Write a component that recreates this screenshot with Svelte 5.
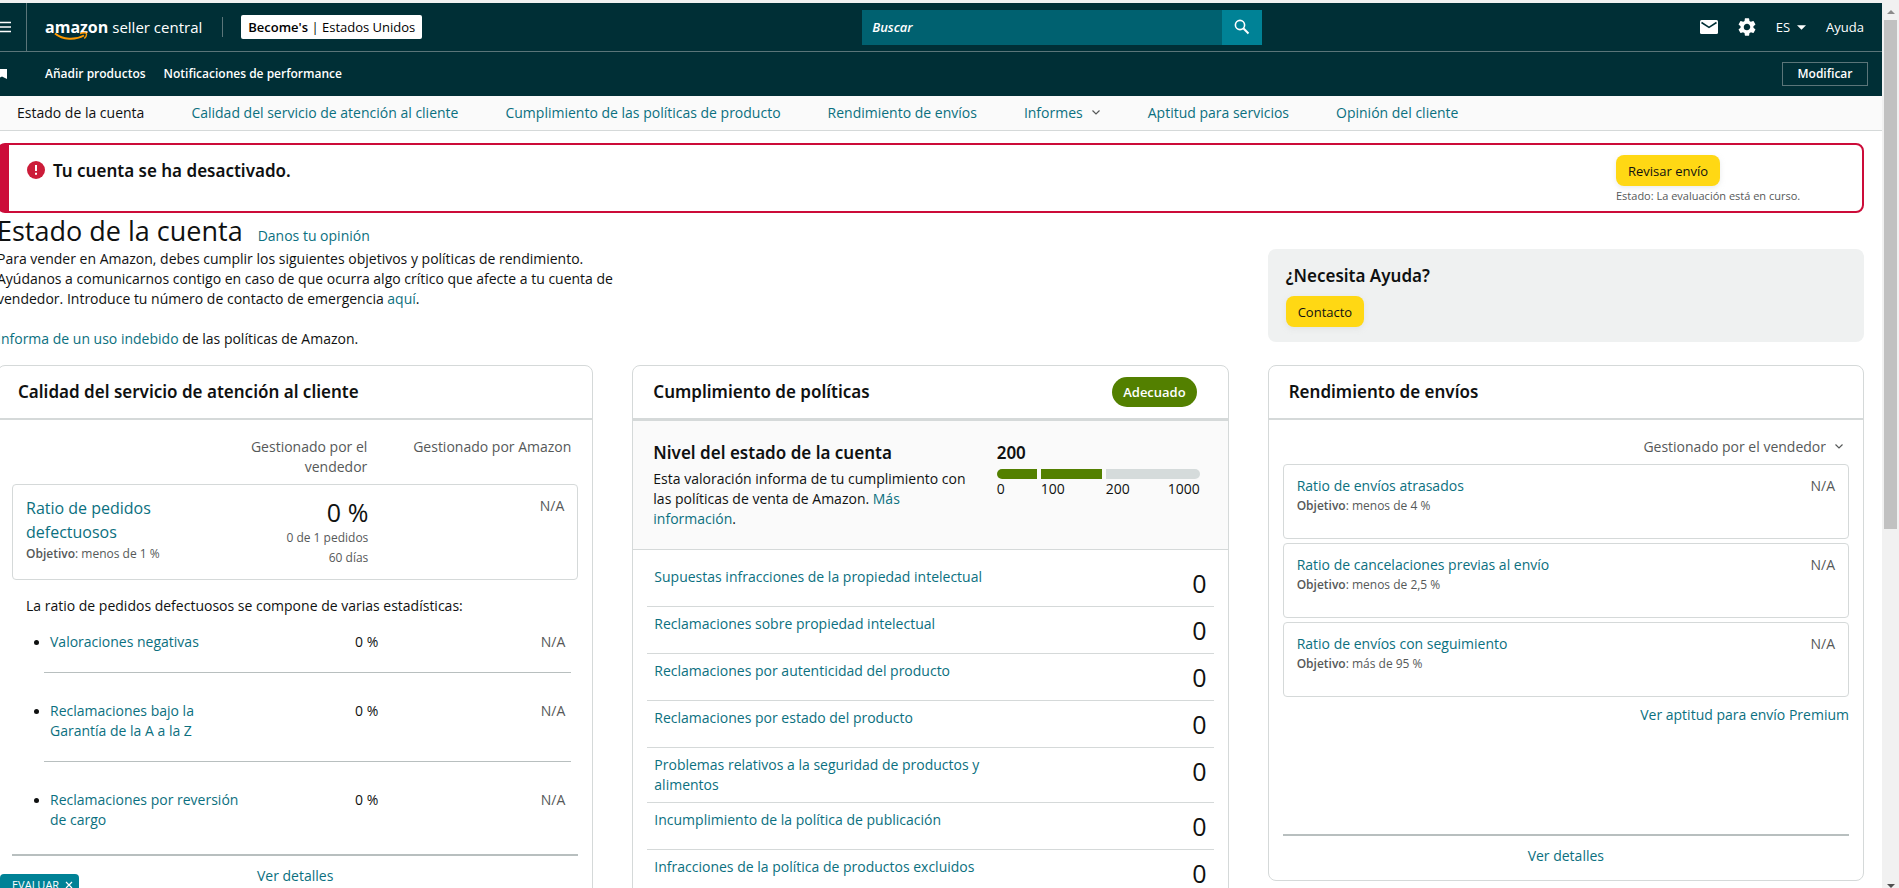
<script lang="ts">
    interface Tab {
        label: string;
        menu?: boolean;
    }

    interface Metric {
        name: string;
        target: string;
        value: string;
    }

    let query = $state('');
    let language = $state('ES');
    let channel = $state('seller');
    let activeTab = $state('Estado de la cuenta');
    let showFeedback = $state(true);

    const tabs: Tab[] = [
        { label: 'Estado de la cuenta' },
        { label: 'Calidad del servicio de atención al cliente' },
        { label: 'Cumplimiento de las políticas de producto' },
        { label: 'Rendimiento de envíos' },
        { label: 'Informes', menu: true },
        { label: 'Aptitud para servicios' },
        { label: 'Opinión del cliente' }
    ];

    const defects = [
        { name: 'Valoraciones negativas', seller: '0 %', amazon: 'N/A' },
        { name: 'Reclamaciones bajo la Garantía de la A a la Z', seller: '0 %', amazon: 'N/A' },
        { name: 'Reclamaciones por reversión de cargo', seller: '0 %', amazon: 'N/A' }
    ];

    const policies = [
        { name: 'Supuestas infracciones de la propiedad intelectual', count: 0 },
        { name: 'Reclamaciones sobre propiedad intelectual', count: 0 },
        { name: 'Reclamaciones por autenticidad del producto', count: 0 },
        { name: 'Reclamaciones por estado del producto', count: 0 },
        { name: 'Problemas relativos a la seguridad de productos y alimentos', count: 0 },
        { name: 'Incumplimiento de la política de publicación', count: 0 },
        { name: 'Infracciones de la política de productos excluidos', count: 0 }
    ];

    const shipping: Metric[] = [
        { name: 'Ratio de envíos atrasados', target: 'menos de 4 %', value: 'N/A' },
        { name: 'Ratio de cancelaciones previas al envío', target: 'menos de 2,5 %', value: 'N/A' },
        { name: 'Ratio de envíos con seguimiento', target: 'más de 95 %', value: 'N/A' }
    ];
</script>

{#snippet chevron()}
    <svg class="chevron" viewBox="0 0 10 10" aria-hidden="true">
        <path d="M1.5 2.500 5 6 8.500 2.500" fill="none" stroke="currentColor" stroke-width="1.2" />
    </svg>
{/snippet}

<div class="page">
    <header>
        <div class="topbar">
            <div class="brand">
                <button class="menu-btn" aria-label="Menú">
                    <svg viewBox="0 0 12 12" aria-hidden="true">
                        <path d="M0 1.500h11M0 6h11M0 10.500h11" stroke="#fff" stroke-width="1.500" />
                    </svg>
                </button>
                <a class="logo" href="#home">
                    <span class="logo-amazon">
                        amazon
                        <svg viewBox="0 0 34 9" aria-hidden="true">
                            <path d="M1 1.500C9 8 21 8.500 30 3.500" fill="none" stroke="#f90" stroke-width="2" />
                            <path d="M26 1.500C29 .6 31.500 .6 32.300 1.300 32.800 2.600 31.800 5 30.300 6.500" fill="none" stroke="#f90" stroke-width="1.400" />
                        </svg>
                    </span>
                    <span class="logo-central">seller central</span>
                </a>
                <button class="account"><b>Become's</b> | Estados Unidos</button>
            </div>

            <form class="search" onsubmit={(e) => e.preventDefault()}>
                <input type="text" placeholder="Buscar" aria-label="Buscar" bind:value={query} />
                <button aria-label="Iniciar búsqueda">
                    <svg viewBox="0 0 16 16" aria-hidden="true">
                        <circle cx="6" cy="6" r="4.600" fill="none" stroke="#fff" stroke-width="1.600" />
                        <path d="M9.300 9.300 14.500 14.500" stroke="#fff" stroke-width="2" />
                    </svg>
                </button>
            </form>

            <div class="tools">
                <a href="#messages" aria-label="Mensajes">
                    <svg class="mail" viewBox="0 0 18 14" aria-hidden="true">
                        <rect width="18" height="14" rx="1.500" fill="#fff" />
                        <path d="M1.500 2.500 9 7.300 16.500 2.500" fill="none" stroke="#002f36" stroke-width="1.600" />
                    </svg>
                </a>
                <a href="#settings" aria-label="Configuración">
                    <svg class="gear" viewBox="2 2 20 20" aria-hidden="true">
                        <path fill="#fff" d="M19.140 12.940c.04-.3.060-.61.060-.94 0-.32-.02-.64-.07-.94l2.030-1.580a.49.49 0 0 0 .12-.61l-1.920-3.320a.488.488 0 0 0-.59-.22l-2.390.96c-.5-.38-1.030-.7-1.620-.94l-.36-2.540a.484.484 0 0 0-.48-.41h-3.840c-.24 0-.43.17-.47.41l-.36 2.540c-.59.24-1.130.57-1.620.94l-2.390-.96c-.22-.08-.47 0-.59.22L2.740 8.870c-.12.210-.08.470.12.610l2.030 1.580c-.05.3-.09.630-.09.940s.02.640.07.940l-2.030 1.580a.49.49 0 0 0-.12.610l1.920 3.320c.12.220.370.290.590.220l2.390-.96c.5.380 1.030.7 1.620.940l.36 2.540c.05.240.240.410.480.410h3.840c.24 0 .44-.17.470-.41l.36-2.540c.59-.24 1.130-.56 1.620-.94l2.390.96c.22.080.470 0 .590-.22l1.920-3.320c.12-.22.070-.47-.12-.61l-2.010-1.580zM12 15.600A3.610 3.610 0 0 1 8.400 12c0-1.980 1.620-3.600 3.600-3.600s3.600 1.620 3.600 3.600-1.620 3.600-3.600 3.600z" />
                    </svg>
                </a>
                <label class="language">
                    <select aria-label="Idioma" bind:value={language}>
                        <option>ES</option>
                        <option>EN</option>
                    </select>
                    <svg viewBox="0 0 10 5" aria-hidden="true"><path d="M0 0h10L5 5z" fill="#fff" /></svg>
                </label>
                <a href="#help">Ayuda</a>
            </div>
        </div>

        <div class="favorites">
            <svg class="bookmark" viewBox="0 0 7 10" aria-hidden="true"><path d="M0 0h7v10L2 7.500 0 8.500z" fill="#fff" /></svg>
            <a href="#add">Añadir productos</a>
            <a href="#notifications">Notificaciones de performance</a>
            <button>Modificar</button>
        </div>
    </header>

    <nav class="tabs">
        {#each tabs as tab}
            <a
                href="#{tab.label}"
                class:active={activeTab === tab.label}
                onclick={() => activeTab = tab.label}
            >
                {tab.label}
                {#if tab.menu}{@render chevron()}{/if}
            </a>
        {/each}
    </nav>

    <main>
        <section class="alert">
            <svg viewBox="0 0 18 18" aria-hidden="true">
                <circle cx="9" cy="9" r="9" fill="#cc1c39" />
                <path d="M8 4h2v6H8zM8 11.800h2v2H8z" fill="#fff" />
            </svg>
            <h2>Tu cuenta se ha desactivado.</h2>
            <div class="alert-action">
                <button class="primary">Revisar envío</button>
                <small>Estado: La evaluación está en curso.</small>
            </div>
        </section>

        <div class="intro">
            <div class="intro-text">
                <div class="heading">
                    <h1>Estado de la cuenta</h1>
                    <a href="#feedback">Danos tu opinión</a>
                </div>
                <p>
                    Para vender en Amazon, debes cumplir los siguientes objetivos y políticas de rendimiento.<br />
                    Ayúdanos a comunicarnos contigo en caso de que ocurra algo crítico que afecte a tu cuenta de<br />
                    vendedor. Introduce tu número de contacto de emergencia <a href="#contact">aquí</a>.
                </p>
                <p><a href="#abuse">Informa de un uso indebido</a> de las políticas de Amazon.</p>
            </div>
            <aside class="help">
                <h2>¿Necesita Ayuda?</h2>
                <button class="primary">Contacto</button>
            </aside>
        </div>

        <div class="cards">
            <section class="card service">
                <div class="card-head">
                    <h2>Calidad del servicio de atención al cliente</h2>
                </div>
                <div class="card-body">
                    <div class="columns">
                        <span>Gestionado por el vendedor</span>
                        <span>Gestionado por Amazon</span>
                    </div>
                    <div class="box defect">
                        <div>
                            <a class="big-link" href="#odr">Ratio de pedidos defectuosos</a>
                            <small class="target"><b>Objetivo</b>: menos de 1 %</small>
                        </div>
                        <div class="defect-value">
                            <strong>0 %</strong>
                            <small class="target">0 de 1 pedidos</small>
                            <small class="target">60 días</small>
                        </div>
                        <span class="muted">N/A</span>
                    </div>
                    <p>La ratio de pedidos defectuosos se compone de varias estadísticas:</p>
                    <ul>
                        {#each defects as defect}
                            <li>
                                <a href="#{defect.name}">{defect.name}</a>
                                <span>{defect.seller}</span>
                                <span class="muted">{defect.amazon}</span>
                            </li>
                        {/each}
                    </ul>
                    <div class="details"><a href="#service">Ver detalles</a></div>
                </div>
            </section>

            <section class="card policy">
                <div class="card-head">
                    <h2>Cumplimiento de políticas</h2>
                    <span class="badge">Adecuado</span>
                </div>
                <div class="rating">
                    <div>
                        <h2>Nivel del estado de la cuenta</h2>
                        <p>
                            Esta valoración informa de tu cumplimiento con las políticas de venta de Amazon.
                            <a href="#rating">Más información</a>.
                        </p>
                    </div>
                    <div>
                        <h2>200</h2>
                        <div class="gauge">
                            <i class="filled"></i>
                            <i class="filled"></i>
                            <i></i>
                            <span>0</span>
                            <span>100</span>
                            <span class="ends">200 <span>1000</span></span>
                        </div>
                    </div>
                </div>
                <ul>
                    {#each policies as policy}
                        <li>
                            <a href="#{policy.name}">{policy.name}</a>
                            <strong>{policy.count}</strong>
                        </li>
                    {/each}
                </ul>
            </section>

            <section class="card shipping">
                <div class="card-head">
                    <h2>Rendimiento de envíos</h2>
                </div>
                <div class="card-body">
                    <label class="channel">
                        <select aria-label="Canal de gestión" bind:value={channel}>
                            <option value="seller">Gestionado por el vendedor</option>
                            <option value="amazon">Gestionado por Amazon</option>
                        </select>
                        {@render chevron()}
                    </label>
                    {#each shipping as metric}
                        <div class="box metric">
                            <div>
                                <a href="#{metric.name}">{metric.name}</a>
                                <small class="target"><b>Objetivo</b>: {metric.target}</small>
                            </div>
                            <span class="muted">{metric.value}</span>
                        </div>
                    {/each}
                    <a class="premium" href="#premium">Ver aptitud para envío Premium</a>
                    <div class="details"><a href="#shipping">Ver detalles</a></div>
                </div>
            </section>
        </div>
    </main>

    {#if showFeedback}
        <button class="feedback" onclick={() => showFeedback = false}>
            EVALUAR
            <svg viewBox="0 0 8 8" aria-hidden="true"><path d="M1 1l6 6M7 1 1 7" stroke="#fff" stroke-width="1.200" /></svg>
        </button>
    {/if}

    <div class="scrollbar" aria-hidden="true">
        <svg viewBox="0 0 8 4"><path d="M0 4 4 0l4 4z" fill="#8b8b8b" /></svg>
        <div class="thumb"></div>
        <svg viewBox="0 0 8 4"><path d="M0 0h8L4 4z" fill="#505050" /></svg>
    </div>
</div>

<style>
    :global(body) {
        margin: 0;
        background: #fff;
    }

    .page {
        box-sizing: border-box;
        height: 100vh;
        overflow: hidden;
        padding-right: 17px;
        border-top: 3px solid #f1f1f1;
        font-family: "Open Sans", "Noto Sans", sans-serif;
        font-size: 14px;
        line-height: 20px;
        color: #0f1111;
    }

    .page :global(*) {
        box-sizing: border-box;
    }

    h1, h2, p, ul {
        margin: 0;
        padding: 0;
    }

    h1 {
        font-size: 27px;
        line-height: 36px;
        font-weight: 400;
    }

    h2 {
        font-family: "Noto Sans", "Open Sans", sans-serif;
        font-size: 17px;
        line-height: 24px;
        font-weight: 600;
    }

    b {
        font-weight: 600;
    }

    small {
        display: block;
        font-size: 11px;
        color: #565959;
    }

    .target {
        font-size: 12px;
    }

    a {
        color: #0b7080;
        text-decoration: none;
    }

    a:hover {
        text-decoration: underline;
    }

    button, input, select {
        font: inherit;
        color: inherit;
    }

    button {
        cursor: pointer;
    }

    select {
        appearance: none;
        field-sizing: content;
        border: none;
        padding: 0;
        background: transparent;
    }

    svg {
        display: block;
        flex-shrink: 0;
    }

    .muted {
        color: #565959;
    }

    .chevron {
        width: 10px;
        height: 10px;
        color: #565959;
    }

    /* Header */
    header {
        background: #002f36;
        color: #fff;
        font-size: 13px;
    }

    header a {
        color: #fff;
        font-weight: 500;
    }

    .topbar {
        display: grid;
        grid-template-columns: 32fr 400px 23fr;
        align-items: center;
        height: 49px;
        border-bottom: 1px solid #5b7579;
    }

    .brand {
        display: flex;
        align-items: center;
        height: 100%;
    }

    .menu-btn {
        width: 27px;
        height: 100%;
        padding: 0;
        border: none;
        border-right: 1px solid #5b7579;
        background: none;
    }

    .menu-btn svg {
        width: 12px;
        height: 12px;
    }

    .logo {
        display: flex;
        align-items: center;
        gap: 4px;
        margin-left: 18px;
        padding-right: 20px;
        border-right: 1px solid #5b7579;
        line-height: 20px;
    }

    .logo:hover {
        text-decoration: none;
    }

    .logo-amazon {
        position: relative;
        font-weight: 700;
        font-size: 16px;
    }

    .logo-amazon svg {
        position: absolute;
        left: 9px;
        top: 15px;
        width: 34px;
        height: 9px;
    }

    .logo-central {
        font-weight: 400;
        font-size: 15px;
    }

    .account {
        margin-left: 18px;
        padding: 0 7px;
        height: 24px;
        border: none;
        border-radius: 2px;
        background: #fff;
        color: #000;
        line-height: 24px;
    }

    .search {
        display: flex;
        height: 35px;
    }

    .search input {
        flex: 1;
        min-width: 0;
        padding: 0 10px;
        border: none;
        background: #006170;
        color: #fff;
    }

    .search input::placeholder {
        color: #fff;
        font-style: italic;
        font-weight: 600;
    }

    .search button {
        display: grid;
        place-items: center;
        width: 40px;
        border: none;
        background: #008296;
    }

    .search svg {
        width: 16px;
        height: 16px;
    }

    .tools {
        display: flex;
        justify-content: flex-end;
        align-items: center;
        gap: 20px;
        padding-right: 18px;
    }

    .mail {
        width: 18px;
        height: 14px;
    }

    .gear {
        width: 18px;
        height: 18px;
    }

    .language {
        display: flex;
        align-items: center;
        gap: 7px;
        font-weight: 500;
    }

    .language svg {
        width: 9px;
        height: 5px;
    }

    .favorites {
        display: flex;
        align-items: center;
        gap: 18px;
        height: 44px;
        padding-right: 14px;
        font-size: 12px;
    }

    .favorites a {
        font-weight: 600;
    }

    .bookmark {
        width: 7px;
        height: 10px;
        margin-right: 20px;
    }

    .favorites button {
        width: 86px;
        height: 24px;
        margin-left: auto;
        padding: 0;
        border: 1px solid #5b7579;
        background: none;
        font-weight: 600;
        line-height: 20px;
    }

    .tabs {
        display: flex;
        gap: 47px;
        height: 35px;
        padding: 7px 17px;
        background: #fafafa;
        border-bottom: 1px solid #d5d9d9;
        white-space: nowrap;
    }

    .tabs a {
        display: flex;
        align-items: center;
        gap: 8px;
    }

    .tabs .active {
        color: #0f1111;
    }

    /* Account summary */
    main {
        margin-left: -3px;
        padding: 12px 18px 0 0;
    }

    .alert {
        display: flex;
        align-items: flex-start;
        gap: 8px;
        height: 70px;
        padding: 10px 18px;
        border: 2px solid #cc0c39;
        border-left-width: 12px;
        border-radius: 8px;
    }

    .alert > svg {
        width: 18px;
        height: 18px;
        margin-top: 6px;
    }

    .alert h2 {
        flex: 1;
        margin-top: 4px;
    }

    .alert-action {
        width: 228px;
    }

    .primary {
        display: block;
        height: 31px;
        padding: 0 12px;
        border: none;
        border-radius: 8px;
        background: #ffd814;
        box-shadow: 0 2px 5px rgba(213, 217, 217, 0.5);
        font-size: 13px;
    }

    .intro,
    .cards {
        display: grid;
        grid-template-columns: repeat(3, minmax(0, 1fr));
        gap: 39px;
        align-items: start;
    }

    .intro-text {
        grid-column: 1 / 3;
    }

    .intro-text p {
        margin-bottom: 20px;
    }

    .heading {
        display: flex;
        align-items: baseline;
        gap: 15px;
    }

    .help {
        grid-column: 3;
        margin-top: 36px;
        padding: 15px 18px;
        border-radius: 8px;
        background: #eff1f1;
    }

    .help .primary {
        margin-top: 8px;
    }

    /* Cards */
    .cards {
        margin-top: -4px;
    }

    .card {
        border: 1px solid #d5d9d9;
        border-radius: 8px;
    }

    .card-head {
        display: flex;
        align-items: center;
        justify-content: space-between;
        height: 54px;
        padding: 0 30px 0 20px;
        border-bottom: 2px solid #d5d9d9;
    }

    .card-body {
        padding: 17px 14px 14px;
    }

    .box {
        border: 1px solid #d5d9d9;
        border-radius: 4px;
        padding: 11px 13px;
    }

    .details {
        padding-top: 10px;
        border-top: 2px solid #b8bfbf;
        text-align: center;
    }

    .columns {
        display: grid;
        grid-template-columns: 160px 184px;
        gap: 20px;
        justify-content: end;
        margin-right: 7px;
        margin-bottom: 7px;
        color: #565959;
        text-align: right;
    }

    .columns span:first-child {
        padding-left: 30px;
    }

    .defect {
        display: grid;
        grid-template-columns: 160px 1fr 196px;
        height: 96px;
    }

    .defect > .muted {
        text-align: right;
    }

    .big-link {
        display: block;
        font-size: 16px;
        line-height: 24px;
    }

    .defect-value {
        text-align: right;
    }

    strong {
        display: block;
        font-size: 25px;
        line-height: 32px;
        font-weight: 400;
    }

    .service p {
        margin: 16px 14px 0;
    }

    .service ul {
        margin: -12px 7px 0 32px;
        list-style: none;
    }

    .service li {
        display: grid;
        grid-template-columns: 190px 1fr 187px;
        padding: 28px 6px 20px;
        border-bottom: 1px solid #b8bfbf;
        text-align: right;
    }

    .service li:last-child {
        padding-bottom: 24px;
        border-bottom: none;
    }

    .service li a {
        position: relative;
        text-align: left;
    }

    .service li a::before {
        content: '';
        position: absolute;
        left: -16px;
        top: 8px;
        width: 5px;
        height: 5px;
        border-radius: 50%;
        background: #0f1111;
    }

    .badge {
        padding: 5px 11px;
        border-radius: 15px;
        background: #538000;
        color: #fff;
        font-size: 13px;
        font-weight: 600;
    }

    .policy .card-head {
        padding-right: 31px;
    }

    .rating {
        display: grid;
        grid-template-columns: 316px 203px;
        justify-content: space-between;
        height: 130px;
        padding: 20px 28px 0 20px;
        border-top: 1px solid #d5d9d9;
        border-bottom: 1px solid #d5d9d9;
        background: #fafafa;
    }

    .rating p {
        margin-top: 4px;
    }

    .gauge {
        display: grid;
        grid-template-columns: 40px 61px 1fr;
        column-gap: 4px;
        margin-top: 4px;
    }

    .gauge i {
        height: 10px;
        background: #d5dbdb;
    }

    .gauge .filled {
        background: #538000;
    }

    .gauge i:first-child {
        border-radius: 5px 0 0 5px;
    }

    .gauge i:nth-child(3) {
        border-radius: 0 5px 5px 0;
    }

    .ends {
        display: flex;
        justify-content: space-between;
    }

    .policy ul {
        padding: 10px 14px;
        list-style: none;
    }

    .policy li {
        display: flex;
        justify-content: space-between;
        padding: 7px;
        border-bottom: 1px solid #d5d9d9;
    }

    .policy li a {
        max-width: 340px;
    }

    .channel {
        display: flex;
        align-items: center;
        justify-content: flex-end;
        gap: 8px;
        margin: 0 5px 7px;
        color: #565959;
    }

    .metric {
        display: flex;
        justify-content: space-between;
        height: 75px;
        margin-bottom: 4px;
    }

    .premium {
        display: block;
        margin: 8px 0 109px;
        text-align: right;
    }

    .feedback {
        position: fixed;
        left: 0;
        bottom: -8px;
        display: flex;
        align-items: center;
        gap: 6px;
        height: 22px;
        padding: 0 6px 0 12px;
        border: none;
        border-radius: 4px 4px 0 0;
        background: #008296;
        color: #fff;
        font-size: 11px;
        font-weight: 500;
    }

    .feedback svg {
        width: 8px;
        height: 8px;
    }

    .scrollbar {
        position: fixed;
        top: 3px;
        right: 0;
        bottom: 0;
        display: flex;
        flex-direction: column;
        align-items: center;
        width: 17px;
        padding: 7px 2px 0;
        background: #f1f1f1;
    }

    .scrollbar svg {
        width: 8px;
        height: 4px;
    }

    .scrollbar .thumb {
        width: 13px;
        height: 58%;
        margin: 6px 0 auto;
        background: #c1c1c1;
    }
</style>
